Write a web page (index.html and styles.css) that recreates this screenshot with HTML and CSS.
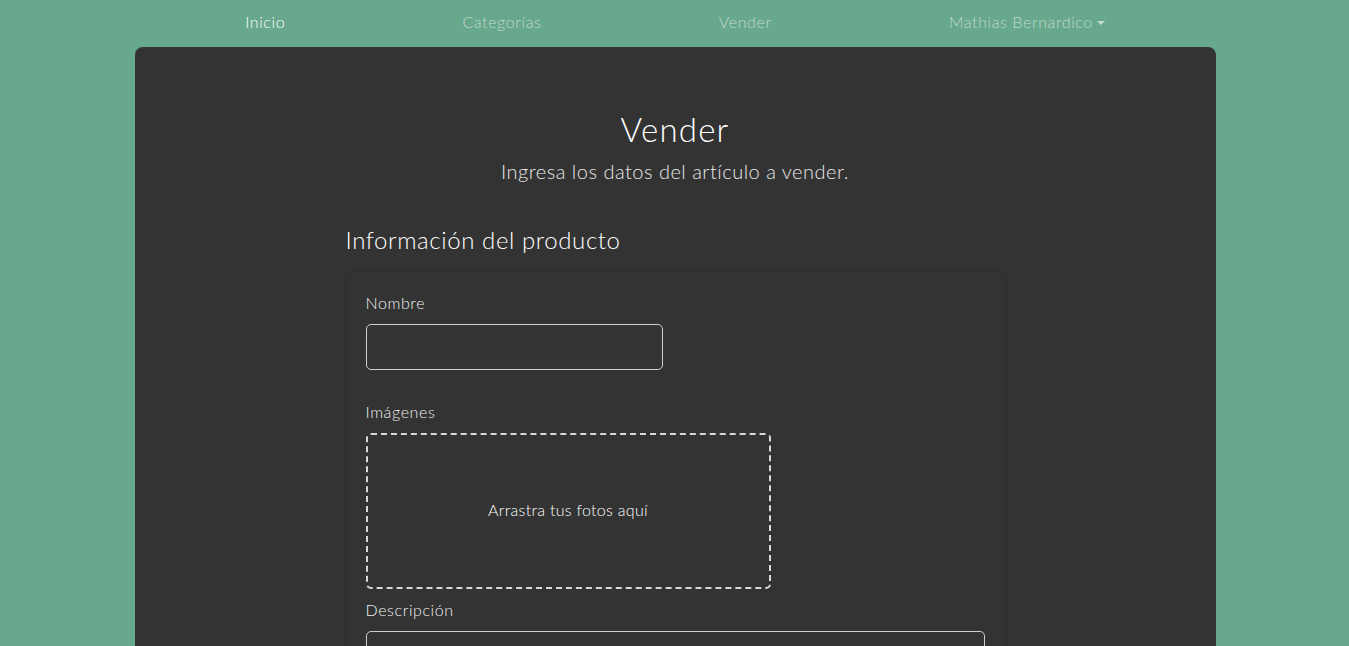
FILE: index.html
```html
<!DOCTYPE html>
<html lang="es">
<head>
<meta charset="utf-8">
<title>Vender</title>
<link rel="stylesheet" href="styles.css">
</head>
<body>
<nav class="topnav">
  <a class="nav-link active" href="#">Inicio</a>
  <a class="nav-link" href="#">Categorías</a>
  <a class="nav-link" href="#">Vender</a>
  <a class="nav-link dropdown" href="#">Mathias Bernardico<span class="caret"></span></a>
</nav>
<main class="panel">
  <header class="page-head">
    <h1 class="title">Vender</h1>
    <p class="lead">Ingresa los datos del artículo a vender.</p>
  </header>
  <section class="form-area">
    <h2 class="section-title">Información del producto</h2>
    <div class="card">
      <div class="group group-name">
        <label class="label">Nombre</label>
        <input class="input input-short" type="text">
      </div>
      <div class="group group-images">
        <label class="label">Imágenes</label>
        <div class="dropzone">Arrastra tus fotos aquí</div>
      </div>
      <div class="group">
        <label class="label">Descripción</label>
        <textarea class="input textarea"></textarea>
      </div>
    </div>
  </section>
</main>
</body>
</html>
```
FILE: styles.css
```css
* { box-sizing: border-box; }
html, body { margin: 0; padding: 0; }
body {
  background: #68a88d;
  font-family: "Lato", "Open Sans", sans-serif;
  color: #fff;
  overflow: hidden;
  padding-left: 1px;
}
.topnav {
  width: 1037px;
  margin: 0 auto;
  display: flex;
  justify-content: space-around;
  padding: 10px 0 13px;
}
.nav-link {
  font-size: 16px;
  line-height: 24px;
  color: rgba(255,255,255,0.58);
  text-decoration: none;
  font-weight: 300;
  letter-spacing: 0.6px;
}
.nav-link.active { color: #fff; }
.caret {
  display: inline-block;
  margin-left: 4px;
  vertical-align: 3px;
  border-top: 4px solid rgba(255,255,255,0.6);
  border-left: 4px solid transparent;
  border-right: 4px solid transparent;
}
.panel {
  width: 1081px;
  margin: 0 auto;
  background: #333333;
  border-radius: 8px 8px 0 0;
  padding-top: 63px;
  min-height: 700px;
}
.page-head { text-align: center; }
.title {
  margin: 0;
  font-size: 33px;
  line-height: 38px;
  font-weight: 300;
  letter-spacing: 1.2px;
  color: #fff;
}
.lead {
  margin: 11px 0 0;
  font-size: 20px;
  line-height: 24px;
  font-weight: 300;
  letter-spacing: 0.5px;
  color: #e8e8e8;
}
.form-area {
  width: 659px;
  margin: 42px auto 0;
}
.section-title {
  margin: 0 0 18px;
  font-size: 24px;
  line-height: 29px;
  font-weight: 300;
  letter-spacing: 0.6px;
  color: #fff;
}
.card {
  background: #333333;
  border-radius: 8px;
  box-shadow: 0 0 3px rgba(0,0,0,0.18);
  padding: 19px 20px 20px;
}
.group { display: flex; flex-direction: column; align-items: flex-start; }
.group-name { margin-bottom: 30px; }
.group-images { margin-bottom: 9px; }
.label {
  font-size: 16px;
  line-height: 24px;
  color: #f0f0f0;
  margin-bottom: 9px;
  font-weight: 300;
  letter-spacing: 0.6px;
}
.input {
  background: #333;
  border: 1px solid #cfcfcf;
  border-radius: 5px;
  height: 46px;
  color: #fff;
  font: inherit;
}
.input-short { width: 297px; }
.textarea { width: 100%; height: 90px; resize: none; }
.dropzone {
  width: 405px;
  height: 156px;
  border: 2px dashed #d8d8d8;
  border-radius: 5px;
  display: flex;
  align-items: center;
  justify-content: center;
  padding-bottom: 3px;
  font-size: 16px;
  font-weight: 300;
  letter-spacing: 0.3px;
  color: #fff;
}
```
